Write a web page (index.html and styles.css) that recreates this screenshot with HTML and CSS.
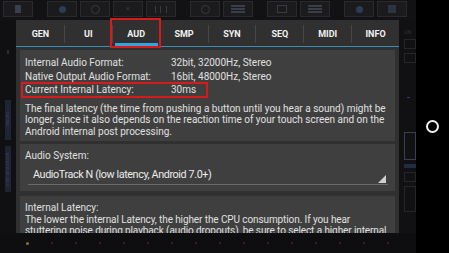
FILE: index.html
```html
<!DOCTYPE html>
<html>
<head>
<meta charset="utf-8">
<link rel="stylesheet" href="styles.css">
</head>
<body>
<div class="screen">
  <div class="app">
    <div class="topbar">
      <div class="tb-btn"><span class="ico ico-door"></span></div>
      <div class="tb-group">
        <div class="tb-btn"><span class="ico ico-dot"></span></div>
        <div class="tb-btn"><span class="ico ico-ring"></span></div>
        <div class="tb-btn"><span class="ico ico-x">×</span></div>
        <div class="tb-btn"><span class="ico ico-fader"></span></div>
      </div>
      <div class="tb-group">
        <div class="tb-btn"><span class="ico ico-ring"></span></div>
        <div class="tb-btn"><span class="ico ico-grid"></span></div>
      </div>
      <div class="tb-group">
        <div class="tb-btn"><span class="ico ico-box"></span></div>
        <div class="tb-btn"><span class="ico ico-grid"></span></div>
      </div>
      <div class="tb-group">
        <div class="tb-btn"><span class="ico ico-dot"></span></div>
        <div class="tb-btn"><span class="ico ico-sq"></span></div>
      </div>
    </div>
    <div class="middle">
      <div class="leftcol">
        <div class="lc-mark"></div>
        <div class="lc-track">TRACKS</div>
        <div class="lc-track lc-track2">STEP SEQUENCER</div>
      </div>
      <div class="center"></div>
      <div class="rightcol">
        <div class="rc-on">ON</div>
        <div class="rc-box"></div>
        <div class="rc-box"></div>
        <div class="rc-dash"></div>
        <div class="rc-box rc-big"></div>
        <div class="rc-blue"></div>
        <div class="rc-box"></div>
        <div class="rc-box rc-tall"></div>
      </div>
    </div>
    <div class="bottombar">
      <span class="bb-dot"></span>
      <span class="bb-tick"></span><span class="bb-tick"></span><span class="bb-tick"></span><span class="bb-tick"></span><span class="bb-tick"></span><span class="bb-tick"></span><span class="bb-tick"></span><span class="bb-tick"></span><span class="bb-tick"></span><span class="bb-tick"></span><span class="bb-tick"></span><span class="bb-tick"></span><span class="bb-tick"></span><span class="bb-tick"></span><span class="bb-tick"></span>
    </div>

    <div class="dialog">
      <div class="tabs">
        <div class="tab first"><div class="tab-label">GEN</div><div class="tab-ind"></div></div>
        <div class="tab"><div class="tab-label">UI</div><div class="tab-ind"></div></div>
        <div class="tab active"><div class="tab-label">AUD</div><div class="tab-ind"></div></div>
        <div class="tab"><div class="tab-label">SMP</div><div class="tab-ind"></div></div>
        <div class="tab"><div class="tab-label">SYN</div><div class="tab-ind"></div></div>
        <div class="tab"><div class="tab-label">SEQ</div><div class="tab-ind"></div></div>
        <div class="tab"><div class="tab-label">MIDI</div><div class="tab-ind"></div></div>
        <div class="tab"><div class="tab-label">INFO</div><div class="tab-ind"></div></div>
      </div>
      <div class="content">
        <div class="panel p1">
          <div class="rows">
            <div>Internal Audio Format:</div><div>32bit, 32000Hz, Stereo</div>
            <div>Native Output Audio Format:</div><div>16bit, 48000Hz, Stereo</div>
            <div>Current Internal Latency:</div><div>30ms</div>
          </div>
          <p class="para">The final latency (the time from pushing a button until you hear a sound) might be longer, since it also depends on the reaction time of your touch screen and on the Android internal post processing.</p>
        </div>
        <div class="panel p2">
          <div class="label">Audio System:</div>
          <div class="select">
            <span class="select-text">AudioTrack N (low latency, Android 7.0+)</span>
            <span class="select-tri"></span>
          </div>
        </div>
        <div class="panel p3">
          <div class="label">Internal Latency:</div>
          <p class="para">The lower the internal Latency, the higher the CPU consumption. If you hear stuttering noise during playback (audio dropouts), be sure to select a higher internal latency value.</p>
        </div>
      </div>
    </div>
    <div class="mark mark-tab"></div>
    <div class="mark mark-row"></div>
  </div>
  <div class="navbar"><span class="home"></span></div>
</div>
</body>
</html>
```
FILE: styles.css
```css
html, body {
  margin: 0;
  padding: 0;
  background: #000;
}
.screen {
  width: 449px;
  height: 253px;
  display: flex;
  overflow: hidden;
  font-family: Roboto, "Noto Sans", sans-serif;
}
.app {
  position: relative;
  width: 416px;
  height: 253px;
  background: #141416;
  display: flex;
  flex-direction: column;
}
.topbar {
  height: 20px;
  display: flex;
  padding: 1px 2px 0 3px;
  box-sizing: border-box;
  gap: 14px;
  background: #121214;
}
.tb-group {
  display: flex;
  gap: 3px;
}
.tb-btn {
  width: 30px;
  height: 16px;
  border: 1px solid #2a2a2e;
  background: #1b1b1e;
  display: flex;
  align-items: center;
  justify-content: center;
  box-sizing: border-box;
}
.ico {
  display: block;
  color: #3a3f4a;
}
.ico-door { width: 6px; height: 8px; background: #384050; }
.ico-dot { width: 7px; height: 7px; border-radius: 50%; background: #2f3b52; }
.ico-ring { width: 7px; height: 7px; border-radius: 50%; border: 1px solid #3a3a3e; }
.ico-x { font-size: 8px; line-height: 8px; color: #383838; }
.ico-fader { width: 10px; height: 7px; border-left: 1px solid #3a3a40; border-right: 1px solid #3a3a40; background: linear-gradient(90deg, transparent 4px, #3a3a40 4px, #3a3a40 5px, transparent 5px); }
.ico-grid { width: 14px; height: 8px; background: repeating-linear-gradient(0deg, #3a3e48 0 2px, transparent 2px 3px); }
.ico-box { width: 8px; height: 6px; border: 1px solid #3a3a40; }
.ico-sq { width: 8px; height: 8px; background: #2c3444; }

.middle {
  flex: 1;
  display: flex;
}
.leftcol {
  width: 16px;
  background: #101013;
  display: flex;
  flex-direction: column;
  align-items: center;
  padding-top: 30px;
  gap: 6px;
}
.lc-mark {
  width: 2px;
  height: 4px;
  background: #2b2b33;
  margin-bottom: 40px;
}
.lc-track {
  width: 6px;
  height: 40px;
  background: #1e2336;
  color: #3a4160;
  font-size: 4px;
  writing-mode: vertical-rl;
  transform: rotate(180deg);
  overflow: hidden;
  text-align: center;
}
.lc-track2 { height: 46px; }
.center { flex: 1; }
.rightcol {
  width: 17px;
  background: #111114;
  display: flex;
  flex-direction: column;
  align-items: flex-end;
  padding-top: 9px;
  gap: 4px;
}
.rc-on { font-size: 5px; color: #3a3020; width: 12px; }
.rc-box { width: 10px; height: 8px; border: 1px solid #26262a; }
.rc-dash { width: 3px; height: 1px; background: #303a66; margin: 30px 6px 30px 0; }
.rc-big { height: 26px; border-color: #3a3f52; }
.rc-blue { width: 12px; height: 4px; background: #222a44; }
.rc-tall { height: 24px; }

.bottombar {
  height: 20px;
  background: #0e0e10;
  display: flex;
  align-items: center;
  padding-left: 26px;
  gap: 22px;
}
.bb-dot { width: 3px; height: 3px; border-radius: 50%; background: #8a7420; }
.bb-tick { width: 2px; height: 2px; background: #3a1a1a; }

.navbar {
  width: 33px;
  height: 253px;
  background: #000;
  display: flex;
  align-items: center;
  justify-content: center;
}
.home {
  width: 13px;
  height: 13px;
  border: 2px solid #f2f2f2;
  border-radius: 50%;
  box-sizing: border-box;
  margin-left: -1px;
}

.dialog {
  position: absolute;
  left: 16px;
  top: 20px;
  width: 383px;
  height: 213px;
  background: #303030;
  overflow: hidden;
  color: #e0e0e0;
}
.tabs {
  display: grid;
  grid-template-columns: repeat(8, 1fr);
  border-bottom: 1px solid #3c8fb4;
  height: 27px;
  box-sizing: border-box;
}
.tab {
  display: flex;
  flex-direction: column;
}
.tab-label {
  margin-top: 5px;
  height: 18px;
  border-left: 1px solid #474747;
  display: flex;
  align-items: center;
  justify-content: center;
  font-weight: bold;
  font-size: 9px;
  color: #f2f2f2;
}
.tab.first .tab-label { border-left-color: transparent; }
.tab-ind {
  height: 3px;
  margin: 0 2px 0 3px;
}
.tab.active .tab-ind { background: #33a4dc; }

.content {
  padding: 3px 4px 0;
  display: flex;
  flex-direction: column;
}
.panel {
  background: #3f3f3f;
  padding: 6px 5px 5px;
}
.p1 { height: 91px; box-sizing: border-box; }
.p2 { margin-top: 3px; height: 47px; box-sizing: border-box; }
.p3 { margin-top: 5px; padding-right: 2px; }
.rows {
  display: grid;
  grid-template-columns: 146px auto;
  font-size: 10px;
  line-height: 13.5px;
}
.para {
  margin: 6px 0 0;
  font-size: 10px;
  line-height: 11.7px;
}
.label {
  font-size: 10px;
  line-height: 12px;
}
.p3 .para {
  margin-top: 0;
  line-height: 11px;
  letter-spacing: -0.1px;
}
.select {
  position: relative;
  margin: 2px 2px 0 3px;
  height: 20px;
  border-bottom: 1px solid #6a6a6a;
  display: flex;
  align-items: center;
  padding-left: 5px;
}
.select-text {
  font-size: 10.8px;
  letter-spacing: -0.4px;
  color: #ececec;
}
.select-tri {
  position: absolute;
  right: 2px;
  bottom: 1px;
  width: 0;
  height: 0;
  border-left: 8px solid transparent;
  border-bottom: 8px solid #cfcfcf;
}

.mark {
  position: absolute;
  border: 2px solid #d91a1a;
  box-sizing: border-box;
}
.mark-tab { left: 110px; top: 18px; width: 51px; height: 30px; }
.mark-row { left: 21px; top: 82px; width: 187px; height: 16px; }
```
